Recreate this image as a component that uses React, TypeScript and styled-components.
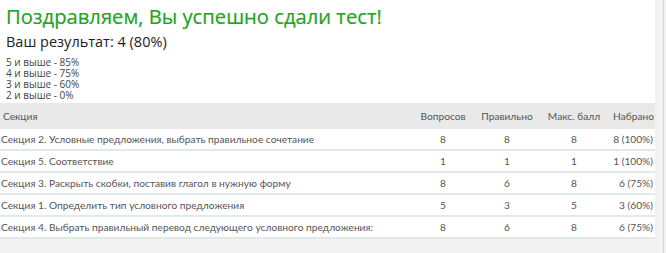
import React from "react";
import styled, { createGlobalStyle } from "styled-components";

const Global = createGlobalStyle`
  html, body { margin: 0; padding: 0; background: #f2f2f2; }
  body { width: 666px; height: 253px; overflow: hidden; }
`;

const Page = styled.div`
  display: flex;
  width: 666px;
  height: 253px;
  background: #f2f2f2;
`;

const Main = styled.div`
  width: 655px;
  display: flex;
  flex-direction: column;
`;

const Edge = styled.div`
  width: 8px;
  border-right: 1px solid #d4d4d4;
  background: #f2f2f2;
`;

const Intro = styled.div`
  background: #fff;
  padding: 3px 6px 2px 6px;
`;

const Title = styled.h1`
  margin: 0;
  font-family: "Open Sans", sans-serif;
  font-weight: 400;
  font-size: 20.2px;
  line-height: 27px;
  color: #22a322;
  -webkit-text-stroke: 0.2px #22a322;
`;

const Result = styled.div`
  font-family: "Open Sans", sans-serif;
  font-size: 14.5px;
  line-height: 20px;
  color: #222;
  margin-top: 2px;
`;

const Scale = styled.div`
  margin-top: 5px;
  font-family: "Open Sans", sans-serif;
  font-size: 10px;
  line-height: 11px;
  color: #444;
`;

const ScaleLine = styled.div`
  height: 11px;
`;

const Table = styled.table`
  width: 655px;
  border-collapse: collapse;
  table-layout: fixed;
  font-family: "Lato", sans-serif;
  font-size: 10.2px;
  color: #555;
  background: #fff;
`;

const HeadCell = styled.th<{ $align?: string }>`
  background: #e9e9e9;
  height: 26px;
  padding: 0 ${(p) => (p.$align === "right" ? "1px" : "0")} 0 ${(p) => (p.$align === "left" ? "3px" : "0")};
  font-weight: 400;
  text-align: ${(p) => p.$align || "center"};
`;

const Row = styled.tr`
  border-bottom: 2px solid #e2eae8;
`;

const Cell = styled.td<{ $align?: string }>`
  height: 20px;
  padding: 0 ${(p) => (p.$align === "right" ? "2px" : "0")} 0 ${(p) => (p.$align === "left" ? "1px" : "0")};
  text-align: ${(p) => p.$align || "center"};
  white-space: nowrap;
  overflow: hidden;
`;

const rows = [
  ["Секция 2. Условные предложения, выбрать правильное сочетание", 8, 8, 8, "8 (100%)"],
  ["Секция 5. Соответствие", 1, 1, 1, "1 (100%)"],
  ["Секция 3. Раскрыть скобки, поставив глагол в нужную форму", 8, 6, 8, "6 (75%)"],
  ["Секция 1. Определить тип условного предложения", 5, 3, 5, "3 (60%)"],
  ["Секция 4. Выбрать правильный перевод следующего условного предложения:", 8, 6, 8, "6 (75%)"],
];

export default function App() {
  return (
    <Page>
      <Global />
      <Main>
        <Intro>
          <Title>Поздравляем, Вы успешно сдали тест!</Title>
          <Result>Ваш результат: 4 (80%)</Result>
          <Scale>
            <ScaleLine>5 и выше - 85%</ScaleLine>
            <ScaleLine>4 и выше - 75%</ScaleLine>
            <ScaleLine>3 и выше - 60%</ScaleLine>
            <ScaleLine>2 и выше - 0%</ScaleLine>
          </Scale>
        </Intro>
        <Table>
          <colgroup>
            <col style={{ width: 413 }} />
            <col style={{ width: 60 }} />
            <col style={{ width: 68 }} />
            <col style={{ width: 66 }} />
            <col style={{ width: 48 }} />
          </colgroup>
          <thead>
            <tr>
              <HeadCell $align="left">Секция</HeadCell>
              <HeadCell>Вопросов</HeadCell>
              <HeadCell>Правильно</HeadCell>
              <HeadCell>Макс. балл</HeadCell>
              <HeadCell $align="right">Набрано</HeadCell>
            </tr>
          </thead>
          <tbody>
            {rows.map((r) => (
              <Row key={r[0] as string}>
                <Cell $align="left">{r[0]}</Cell>
                <Cell>{r[1]}</Cell>
                <Cell>{r[2]}</Cell>
                <Cell>{r[3]}</Cell>
                <Cell $align="right">{r[4]}</Cell>
              </Row>
            ))}
          </tbody>
        </Table>
      </Main>
      <Edge />
    </Page>
  );
}
